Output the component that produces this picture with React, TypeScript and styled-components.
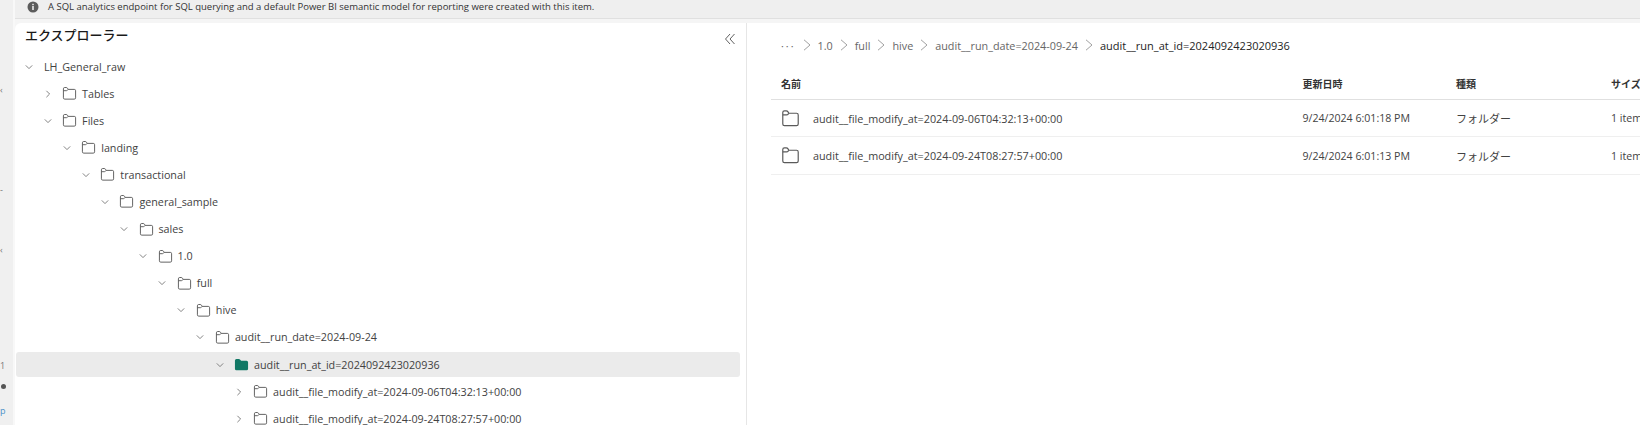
import React from 'react';
import styled, { createGlobalStyle } from 'styled-components';

const UI_FONT = '"Open Sans", "Noto Sans CJK JP", sans-serif';

const GlobalStyle = createGlobalStyle`
  html, body {
    margin: 0;
    height: 100%;
    overflow: hidden;
    background: #f5f5f5;
    font-family: ${UI_FONT};
    color: #424242;
  }
`;

const Page = styled.div`
  display: grid;
  grid-template-columns: 15px 1fr;
  width: 1640px;
  height: 425px;
  overflow: hidden;
`;

const Rail = styled.div`
  display: flex;
  flex-direction: column;
  background: linear-gradient(to right, #f0f0f0 13px, #f8f8f8 13px);
  overflow: hidden;
`;

const RailMark = styled.span<{ $top: number; $color?: string }>`
  display: block;
  height: 12px;
  margin-top: ${p => p.$top}px;
  font-size: 9px;
  line-height: 12px;
  color: ${p => p.$color || '#777'};
`;

const RailDot = styled.span`
  display: block;
  width: 5px;
  height: 5px;
  margin: 12px 0 0 1px;
  border-radius: 50%;
  background: #555;
`;

const Main = styled.div`
  display: flex;
  flex-direction: column;
  min-width: 0;
`;

const InfoBar = styled.div`
  display: flex;
  align-items: center;
  gap: 9px;
  flex: none;
  height: 13px;
  padding: 0 0 5px 12px;
  background: #efefef;
  border-bottom: 1px solid #e0e0e0;
  font-size: 9.5px;
  color: #333;
  overflow: hidden;
`;

const Card = styled.div`
  display: grid;
  grid-template-columns: 732px 1fr;
  flex: 1;
  min-height: 0;
  margin-top: 4px;
  background: #fff;
  border-top-left-radius: 6px;
  overflow: hidden;
`;

const TreePanel = styled.div`
  border-right: 1px solid #e6e6e6;
  overflow: hidden;
`;

const PanelHeader = styled.div`
  display: flex;
  align-items: center;
  justify-content: space-between;
  height: 23px;
  padding: 0 10px 8px 10px;
`;

const PanelTitle = styled.h2`
  margin: 0;
  font-size: 13px;
  font-weight: 500;
  color: #1a1a1a;
`;

const CollapseButton = styled.span`
  display: flex;
  margin-top: 9px;
  color: #616161;
`;

const TreeRow = styled.div<{ $depth: number; $selected?: boolean }>`
  display: flex;
  align-items: center;
  flex: none;
  height: 25px;
  margin: 0 6px 2.1px 1px;
  padding-left: ${p => 8 + p.$depth * 19.1}px;
  border-radius: 3px;
  background: ${p => (p.$selected ? '#ebebeb' : 'transparent')};
  font-size: 10.75px;
  white-space: nowrap;
`;

const Toggle = styled.span`
  display: flex;
  justify-content: center;
  flex: none;
  width: 9px;
  margin-right: 10px;
  color: #757575;
`;

const TreeLabel = styled.span`
  margin-left: 5px;
  color: #424242;
`;

const RootLabel = styled.span`
  margin-left: 1px;
  color: #424242;
`;

const Content = styled.div`
  min-width: 0;
  padding-left: 24px;
`;

const Breadcrumb = styled.div`
  display: flex;
  align-items: center;
  height: 44px;
  padding-left: 10px;
  font-size: 10.8px;
  color: #666;
  white-space: nowrap;
`;

const Crumb = styled.span<{ $current?: boolean }>`
  font-size: ${p => (p.$current ? '11px' : '10.8px')};
  color: ${p => (p.$current ? '#242424' : '#666')};
`;

const CrumbSep = styled.span`
  display: flex;
  margin: 0 5px;
  color: #a0a0a0;
`;

const Dots = styled.span`
  letter-spacing: 2px;
  color: #666;
`;

const TableRow = styled.div<{ $head?: boolean }>`
  display: grid;
  grid-template-columns: 521.5px 153.5px 155px 1fr;
  align-items: center;
  height: ${p => (p.$head ? '32px' : '36.4px')};
  padding-left: 10px;
  border-bottom: ${p => (p.$head ? '1.5px solid #e0e0e0' : '1px solid #efefef')};
  font-size: 10.6px;
  color: #424242;
  white-space: nowrap;
`;

const HeadCell = styled.span`
  font-size: 10px;
  font-weight: 700;
  color: #333;
`;

const KindCell = styled.span`
  font-size: 11px;
`;

const NameCell = styled.span`
  display: flex;
  align-items: center;
  gap: 13px;
  font-size: 10.8px;
`;

const Info = () => (
  <svg width="12" height="12" viewBox="0 0 12 12">
    <circle cx="6" cy="6" r="5.5" fill="#5c5c5c" />
    <rect x="5.3" y="5" width="1.4" height="4" fill="#fff" />
    <rect x="5.3" y="2.8" width="1.4" height="1.4" fill="#fff" />
  </svg>
);

const Chevron = ({ open }: { open?: boolean }) => (
  <svg width="8" height="8" viewBox="0 0 8 8" fill="none" stroke="currentColor" strokeWidth="0.9">
    {open ? <path d="M0.8 2.4 L4 5.6 L7.2 2.4" /> : <path d="M2.4 0.8 L5.6 4 L2.4 7.2" />}
  </svg>
);

const CrumbChevron = () => (
  <svg width="12" height="12" viewBox="0 0 12 12" fill="none" stroke="currentColor" strokeWidth="1">
    <path d="M3 0.8 L9 6 L3 11.2" />
  </svg>
);

const Folder = ({ size = 15, filled }: { size?: number; filled?: boolean }) =>
  filled ? (
    <svg width={size} height={size} viewBox="0 0 16 16" style={{ flex: 'none' }}>
      <path
        d="M1 12.6 V3.6 Q1 2 2.6 2 H5.2 Q6 2 6.6 2.8 L7.6 4 H13.4 Q15 4 15 5.6 V12.6 Q15 14.2 13.4 14.2 H2.6 Q1 14.2 1 12.6 Z"
        fill="#117865"
      />
    </svg>
  ) : (
    <svg width={size} height={size} viewBox="0 0 16 16" fill="none" stroke="#5a5a5a" strokeWidth="1" style={{ flex: 'none' }}>
      <path d="M1.5 12.6 V3 Q1.5 1.6 2.9 1.6 H4.4 Q5.4 1.6 5.9 2.4 L6.6 3.6 H13.1 Q14.5 3.6 14.5 5 V12.6 Q14.5 14 13.1 14 H2.9 Q1.5 14 1.5 12.6 Z" />
      <path d="M1.5 5 H4.6 Q5.6 5 6 4.3 L6.6 3.6" />
    </svg>
  );

const CollapseIcon = () => (
  <svg width="12" height="12" viewBox="0 0 12 12" fill="none" stroke="currentColor" strokeWidth="1">
    <path d="M6 1 L1.5 6 L6 11" />
    <path d="M10.5 1 L6 6 L10.5 11" />
  </svg>
);

const treeItems = [
  { label: 'Tables', depth: 1 },
  { label: 'Files', depth: 1, open: true },
  { label: 'landing', depth: 2, open: true },
  { label: 'transactional', depth: 3, open: true },
  { label: 'general_sample', depth: 4, open: true },
  { label: 'sales', depth: 5, open: true },
  { label: '1.0', depth: 6, open: true },
  { label: 'full', depth: 7, open: true },
  { label: 'hive', depth: 8, open: true },
  { label: 'audit__run_date=2024-09-24', depth: 9, open: true },
  { label: 'audit__run_at_id=2024092423020936', depth: 10, open: true, selected: true },
  { label: 'audit__file_modify_at=2024-09-06T04:32:13+00:00', depth: 11 },
  { label: 'audit__file_modify_at=2024-09-24T08:27:57+00:00', depth: 11 },
];

const crumbs = ['1.0', 'full', 'hive', 'audit__run_date=2024-09-24'];

const files = [
  { name: 'audit__file_modify_at=2024-09-06T04:32:13+00:00', date: '9/24/2024 6:01:18 PM' },
  { name: 'audit__file_modify_at=2024-09-24T08:27:57+00:00', date: '9/24/2024 6:01:13 PM' },
];

export default function App() {
  return (
    <Page>
      <GlobalStyle />
      <Rail>
        <RailMark $top={84}>‹</RailMark>
        <RailMark $top={88}>-</RailMark>
        <RailMark $top={48}>‹</RailMark>
        <RailMark $top={104}>1</RailMark>
        <RailDot />
        <RailMark $top={16} $color="#4a90c8">p</RailMark>
      </Rail>
      <Main>
        <InfoBar>
          <Info />
          <span>A SQL analytics endpoint for SQL querying and a default Power BI semantic model for reporting were created with this item.</span>
        </InfoBar>
        <Card>
          <TreePanel>
            <PanelHeader>
              <PanelTitle>エクスプローラー</PanelTitle>
              <CollapseButton>
                <CollapseIcon />
              </CollapseButton>
            </PanelHeader>
            <TreeRow $depth={0}>
              <Toggle>
                <Chevron open />
              </Toggle>
              <RootLabel>LH_General_raw</RootLabel>
            </TreeRow>
            {treeItems.map(item => (
              <TreeRow key={item.label + item.depth + item.selected} $depth={item.depth} $selected={item.selected}>
                <Toggle>
                  <Chevron open={item.open} />
                </Toggle>
                <Folder filled={item.selected} />
                <TreeLabel>{item.label}</TreeLabel>
              </TreeRow>
            ))}
          </TreePanel>
          <Content>
            <Breadcrumb>
              <Dots>···</Dots>
              {crumbs.map(c => (
                <React.Fragment key={c}>
                  <CrumbSep>
                    <CrumbChevron />
                  </CrumbSep>
                  <Crumb>{c}</Crumb>
                </React.Fragment>
              ))}
              <CrumbSep>
                <CrumbChevron />
              </CrumbSep>
              <Crumb $current>audit__run_at_id=2024092423020936</Crumb>
            </Breadcrumb>
            <TableRow $head>
              <HeadCell>名前</HeadCell>
              <HeadCell>更新日時</HeadCell>
              <HeadCell>種類</HeadCell>
              <HeadCell>サイズ</HeadCell>
            </TableRow>
            {files.map(f => (
              <TableRow key={f.name}>
                <NameCell>
                  <Folder size={19} />
                  {f.name}
                </NameCell>
                <span>{f.date}</span>
                <KindCell>フォルダー</KindCell>
                <span>1 item</span>
              </TableRow>
            ))}
          </Content>
        </Card>
      </Main>
    </Page>
  );
}
